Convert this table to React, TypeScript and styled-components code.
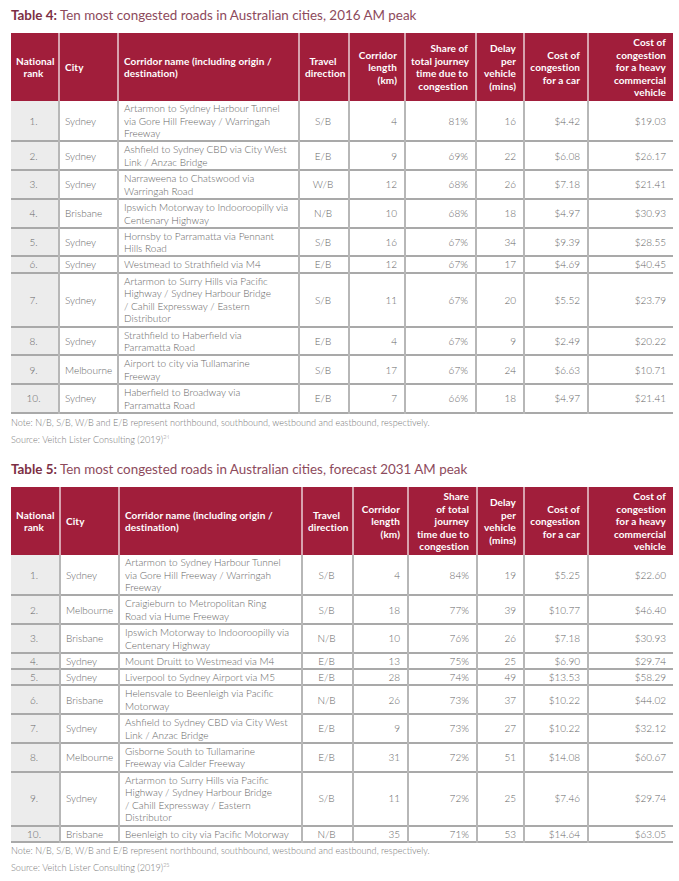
import styled, { createGlobalStyle } from "styled-components";

const GlobalStyle = createGlobalStyle`
  body {
    margin: 0;
    background: #ffffff;
    font-family: Lato, "Open Sans", "Liberation Sans", sans-serif;
  }
`

const Page = styled.div`
  display: flex;
  flex-direction: column;
  padding: 6px 6px 0 11px;
  width: 662px;
`

const Section = styled.section<{ $gap: number }>`
  display: flex;
  flex-direction: column;
  margin-bottom: ${(p) => p.$gap}px;
`

const Title = styled.h2`
  margin: 0 0 9px 0;
  font-size: 13.4px;
  line-height: 18px;
  font-weight: 400;
  color: #8d4a5c;
  white-space: nowrap;

  b {
    font-weight: 700;
    color: #7c2f44;
  }
`

const Table = styled.table`
  width: 662px;
  border-collapse: collapse;
  table-layout: fixed;
  font-size: 10px;
  line-height: 12.6px;
`

const HeadCell = styled.th<{ $align: string }>`
  background: #a11e3b;
  color: #ffffff;
  font-weight: 700;
  text-align: ${(p) => p.$align};
  vertical-align: middle;
  white-space: pre;
  padding: 3px 7px 2px 5px;
  border-right: 2px solid #d8a2ae;
  letter-spacing: 0.1px;

  &:last-child {
    border-right: none;
  }
`

const Row = styled.tr`
  border-bottom: 2px solid #a9a9a9;
`

const Cell = styled.td<{ $align: string; $shade?: boolean }>`
  background: ${(p) => (p.$shade ? "#ececec" : "#ffffff")};
  color: #666666;
  font-weight: 300;
  text-align: ${(p) => p.$align};
  vertical-align: middle;
  white-space: pre;
  padding: 1px 7px 0.6px 5px;
  border-right: 2px solid #b7b7b7;

  &:last-child {
    border-right: none;
  }
`

const Note = styled.p<{ $top: number }>`
  margin: ${(p) => p.$top}px 0 0 0;
  font-size: 9.1px;
  line-height: 11px;
  height: 11px;
  color: #777777;
  font-weight: 300;
  white-space: nowrap;

  sup {
    font-size: 5.5px;
    line-height: 0;
    vertical-align: 4px;
  }
`

type Col = { head: string; align: string; body: string }

const columns: Col[] = [
  { head: "National\nrank", align: "center", body: "center" },
  { head: "City", align: "left", body: "left" },
  { head: "Corridor name (including origin /\ndestination)", align: "left", body: "left" },
  { head: "Travel\ndirection", align: "center", body: "center" },
  { head: "Corridor\nlength\n(km)", align: "right", body: "right" },
  { head: "Share of\ntotal journey\ntime due to\ncongestion", align: "right", body: "right" },
  { head: "Delay\nper\nvehicle\n(mins)", align: "right", body: "right" },
  { head: "Cost of\ncongestion\nfor a car", align: "right", body: "right" },
  { head: "Cost of\ncongestion\nfor a heavy\ncommercial\nvehicle", align: "right", body: "right" },
]

const table4Rows: string[][] = [
  ["1.", "Sydney", "Artarmon to Sydney Harbour Tunnel\nvia Gore Hill Freeway / Warringah\nFreeway", "S/B", "4", "81%", "16", "$4.42", "$19.03"],
  ["2.", "Sydney", "Ashfield to Sydney CBD via City West\nLink / Anzac Bridge", "E/B", "9", "69%", "22", "$6.08", "$26.17"],
  ["3.", "Sydney", "Narraweena to Chatswood via\nWarringah Road", "W/B", "12", "68%", "26", "$7.18", "$21.41"],
  ["4.", "Brisbane", "Ipswich Motorway to Indooroopilly via\nCentenary Highway", "N/B", "10", "68%", "18", "$4.97", "$30.93"],
  ["5.", "Sydney", "Hornsby to Parramatta via Pennant\nHills Road", "S/B", "16", "67%", "34", "$9.39", "$28.55"],
  ["6.", "Sydney", "Westmead to Strathfield via M4", "E/B", "12", "67%", "17", "$4.69", "$40.45"],
  ["7.", "Sydney", "Artarmon to Surry Hills via Pacific\nHighway / Sydney Harbour Bridge\n/ Cahill Expressway / Eastern\nDistributor", "S/B", "11", "67%", "20", "$5.52", "$23.79"],
  ["8.", "Sydney", "Strathfield to Haberfield via\nParramatta Road", "E/B", "4", "67%", "9", "$2.49", "$20.22"],
  ["9.", "Melbourne", "Airport to city via Tullamarine\nFreeway", "S/B", "17", "67%", "24", "$6.63", "$10.71"],
  ["10.", "Sydney", "Haberfield to Broadway via\nParramatta Road", "E/B", "7", "66%", "18", "$4.97", "$21.41"],
]

const table5Rows: string[][] = [
  ["1.", "Sydney", "Artarmon to Sydney Harbour Tunnel\nvia Gore Hill Freeway / Warringah\nFreeway", "S/B", "4", "84%", "19", "$5.25", "$22.60"],
  ["2.", "Melbourne", "Craigieburn to Metropolitan Ring\nRoad via Hume Freeway", "S/B", "18", "77%", "39", "$10.77", "$46.40"],
  ["3.", "Brisbane", "Ipswich Motorway to Indooroopilly via\nCentenary Highway", "N/B", "10", "76%", "26", "$7.18", "$30.93"],
  ["4.", "Sydney", "Mount Druitt to Westmead via M4", "E/B", "13", "75%", "25", "$6.90", "$29.74"],
  ["5.", "Sydney", "Liverpool to Sydney Airport via M5", "E/B", "28", "74%", "49", "$13.53", "$58.29"],
  ["6.", "Brisbane", "Helensvale to Beenleigh via Pacific\nMotorway", "N/B", "26", "73%", "37", "$10.22", "$44.02"],
  ["7.", "Sydney", "Ashfield to Sydney CBD via City West\nLink / Anzac Bridge", "E/B", "9", "73%", "27", "$10.22", "$32.12"],
  ["8.", "Melbourne", "Gisborne South to Tullamarine\nFreeway via Calder Freeway", "E/B", "31", "72%", "51", "$14.08", "$60.67"],
  ["9.", "Sydney", "Artarmon to Surry Hills via Pacific\nHighway / Sydney Harbour Bridge\n/ Cahill Expressway / Eastern\nDistributor", "S/B", "11", "72%", "25", "$7.46", "$29.74"],
  ["10.", "Brisbane", "Beenleigh to city via Pacific Motorway", "N/B", "35", "71%", "53", "$14.64", "$63.05"],
]

const widths4 = [48, 59, 181, 50, 56, 71, 48, 64, 85]
const widths5 = [49, 59, 183, 51, 55, 69, 47, 64, 85]

// header of table 5 splits "Share of total journey..." differently
const heads5 = columns.map((c, i) =>
  i === 5 ? "Share\nof total\njourney\ntime due to\ncongestion" : c.head
)

const CongestionTable = ({ rows, widths, heads }: { rows: string[][]; widths: number[]; heads: string[] }) => (
  <Table>
    <colgroup>
      {widths.map((w, i) => (
        <col key={i} style={{ width: w }} />
      ))}
    </colgroup>
    <thead>
      <tr>
        {columns.map((c, i) => (
          <HeadCell key={i} $align={c.align}>
            {heads[i]}
          </HeadCell>
        ))}
      </tr>
    </thead>
    <tbody>
      {rows.map((r, ri) => (
        <Row key={ri}>
          {r.map((v, ci) => (
            <Cell key={ci} $align={columns[ci].body} $shade={ci === 0}>
              {v}
            </Cell>
          ))}
        </Row>
      ))}
    </tbody>
  </Table>
)

const App = (): JSX.Element => {
  return (
    <>
      <GlobalStyle />
      <Page>
        <Section $gap={15}>
          <Title>
            <b>Table 4:</b> Ten most congested roads in Australian cities, 2016 AM peak
          </Title>
          <CongestionTable rows={table4Rows} widths={widths4} heads={columns.map((c) => c.head)} />
          <Note $top={3}>
            Note: N/B, S/B, W/B and E/B represent northbound, southbound, westbound and eastbound, respectively.
          </Note>
          <Note $top={6}>
            Source: Veitch Lister Consulting (2019)<sup>24</sup>
          </Note>
        </Section>
        <Section $gap={0}>
          <Title>
            <b>Table 5:</b> Ten most congested roads in Australian cities, forecast 2031 AM peak
          </Title>
          <CongestionTable rows={table5Rows} widths={widths5} heads={heads5} />
          <Note $top={2}>
            Note: N/B, S/B, W/B and E/B represent northbound, southbound, westbound and eastbound, respectively.
          </Note>
          <Note $top={6}>
            Source: Veitch Lister Consulting (2019)<sup>25</sup>
          </Note>
        </Section>
      </Page>
    </>
  )
}

export default App;
